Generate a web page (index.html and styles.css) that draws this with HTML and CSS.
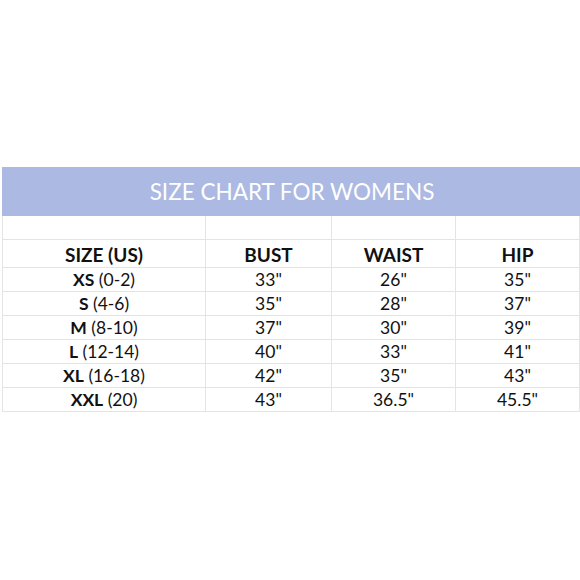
FILE: index.html
```html
<!DOCTYPE html>
<html>
<head>
<meta charset="utf-8">
<link rel="stylesheet" href="styles.css">
</head>
<body>
<div class="page">
  <table class="chart">
    <colgroup>
      <col class="c1"><col class="c2"><col class="c3"><col class="c4">
    </colgroup>
    <tr class="band"><td colspan="4">SIZE CHART FOR WOMENS</td></tr>
    <tr class="blank"><td></td><td></td><td></td><td></td></tr>
    <tr class="head"><td>SIZE (US)</td><td>BUST</td><td>WAIST</td><td>HIP</td></tr>
    <tr class="row"><td><b>XS</b> (0-2)</td><td>33"</td><td>26"</td><td>35"</td></tr>
    <tr class="row"><td><b>S</b> (4-6)</td><td>35"</td><td>28"</td><td>37"</td></tr>
    <tr class="row"><td><b>M</b> (8-10)</td><td>37"</td><td>30"</td><td>39"</td></tr>
    <tr class="row"><td><b>L</b> (12-14)</td><td>40"</td><td>33"</td><td>41"</td></tr>
    <tr class="row"><td><b>XL</b> (16-18)</td><td>42"</td><td>35"</td><td>43"</td></tr>
    <tr class="row"><td><b>XXL</b> (20)</td><td>43"</td><td>36.5"</td><td>45.5"</td></tr>
  </table>
</div>
</body>
</html>
```
FILE: styles.css
```css
html, body {
  margin: 0;
  padding: 0;
  background: #ffffff;
}
.page {
  padding-top: 167px;
  padding-left: 2px;
}
.chart {
  border-collapse: collapse;
  table-layout: fixed;
  width: 577px;
  font-family: Lato, "Open Sans", sans-serif;
  color: #111111;
}
.c1 { width: 203px; }
.c2 { width: 126px; }
.c3 { width: 124px; }
.c4 { width: 124px; }
.chart td {
  border: 1px solid #e4e4e4;
  text-align: center;
  padding: 0;
  vertical-align: middle;
}
.band td {
  background: #abb9e3;
  color: #ffffff;
  height: 47px;
  font-size: 22.5px;
  border-color: #abb9e3;
  padding-left: 2px;
}
.blank td { height: 23px; }
.head td {
  height: 25px;
  font-size: 19px;
  font-weight: 700;
  padding-top: 2px;
}
.row td {
  height: 23px;
  font-size: 17.5px;
}
.row b { font-weight: 700; }
```
